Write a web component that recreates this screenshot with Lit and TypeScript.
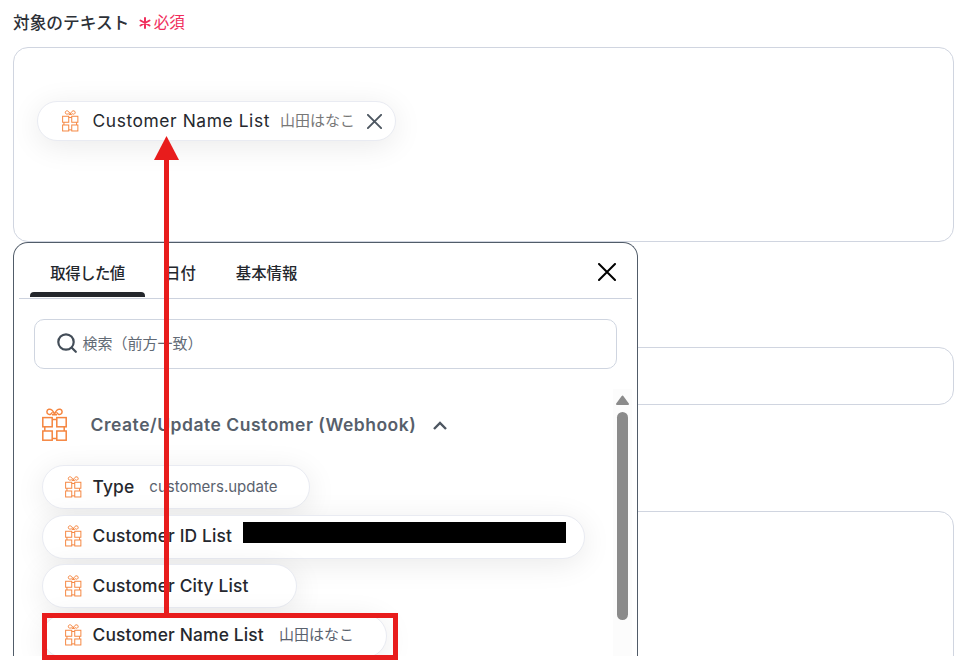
import { LitElement, html, css, svg } from "lit";
import { customElement, property } from "lit/decorators.js";

@customElement("gift-icon")
class GiftIcon extends LitElement {
  static styles = css`
    :host { display: block; flex: none; width: 25px; height: 33px; }
    svg { display: block; width: 100%; height: 100%; overflow: visible; }
  `;
  render() {
    const squares = [[0.8, 9.6], [14.8, 9.6], [0.8, 23], [14.8, 23]];
    return html`<svg viewBox="0 0 25 33" fill="none" stroke="#f5853f" stroke-width="1.5">
      <path d="M2.800 11.500h19.400v19h-19.400z" />
      ${squares.map(([x, y]) => svg`<rect x=${x} y=${y} width="9.4" height="9.2" fill="#fff" />`)}
      <path d="M12.500 6.500C11.500 3 9 .8 6.800 1.300 4.500 1.900 4.200 5 6.300 6.200c1.800.9 3.400-.6 4-2M12.500 6.500C13.500 3 16 .8 18.200 1.300c2.300.6 2.600 3.700.5 4.900-1.800.9-3.400-.6-4-2M10 6.800h5" />
    </svg>`;
  }
}

@customElement("value-chip")
class ValueChip extends LitElement {
  @property() label = "";
  @property() value = "";
  @property({ type: Boolean }) selected = false;
  @property({ type: Boolean }) redacted = false;
  static styles = css`
    :host {
      display: flex; align-items: center; box-sizing: border-box; width: max-content;
      height: 44px; padding: 0 32px 1.500px 22px; border: 1px solid #e9ebf2; border-radius: 22px;
      background: #fff; box-shadow: 0 5px 30px rgba(0, 0, 0, .085); white-space: nowrap;
    }
    gift-icon { width: 16.500px; height: 21.500px; }
    .label { margin-left: 11px; font-size: 17.400px; font-weight: 500; color: #25282e; letter-spacing: .15px; }
    .value { margin-left: 15px; font-size: 15px; line-height: 20px; margin-top: 1px; color: #5a626e; }
    .mask { width: 323px; height: 21px; margin: 0 -14px 6px 10.500px; background: #000; }
    .remove { width: 15px; height: 15px; margin-left: 12.500px; stroke: #4d5761; stroke-width: 1.800; fill: none; stroke-linecap: round; }
    :host([selected]) { height: 40px; padding: 0 12.500px 0 24px; }
    :host([selected]) gift-icon { margin-bottom: 1px; }
    :host([selected]) .label { margin: 0 0 1px 14px; font-size: 17.400px; font-weight: 400; letter-spacing: .58px; }
    :host([selected]) .value { margin: 0 0 1px 10px; color: #777; }
  `;
  render() {
    return html`<gift-icon></gift-icon>
      <span class="label">${this.label}</span>
      ${this.redacted ? html`<span class="mask"></span>` : html`<span class="value">${this.value}</span>`}
      ${this.selected ? html`<svg class="remove" viewBox="0 0 14 14"><path d="M.8.8l12.400 12.400M13.200.8L.8 13.200" /></svg>` : ""}`;
  }
}

@customElement("value-picker")
class ValuePicker extends LitElement {
  static styles = css`
    :host {
      display: flex; flex-direction: column; box-sizing: border-box; width: 625px; height: 414px;
      border: 1px solid #515c69; border-bottom: 0; border-radius: 15px 15px 0 0; background: #fff; overflow: hidden;
    }
    .tabs { display: flex; flex: none; box-sizing: border-box; height: 56px; margin: 0 5px; padding-left: 11px; border-bottom: 1px solid #ccd2de; }
    .tab { display: flex; flex-direction: column; justify-content: space-between; align-items: center; box-sizing: border-box; padding: 19px 20px 1px; font-size: 15.400px; line-height: 24px; font-weight: 500; color: #23272d; }
    .tab.active { padding: 19px 0 1px; width: 115px; }
    .tab.active span { letter-spacing: -.5px; }
    .bar { flex: none; width: 115px; height: 5px; border-radius: 4px 4px 0 0; background: #24272c; }
    .close { width: 18px; height: 18px; margin: 20px 16px 0 auto; fill: none; stroke: #000; stroke-width: 2; stroke-linecap: round; }
    .search { display: flex; flex: none; align-items: center; box-sizing: border-box; height: 50px; margin: 20px 20px 0; padding: 0 21.500px 2px; gap: 6px; border: 1px solid #cfd5e0; border-radius: 10px; font-size: 15px; color: #626a75; }
    .search span { line-height: 20px; margin-top: 1px; }
    .search svg { width: 20px; height: 20px; fill: none; stroke: #434d58; stroke-width: 2.200; stroke-linecap: round; }
    .body { display: flex; justify-content: space-between; height: 267px; margin: 20px 5px 0 0; }
    .list { flex: 1; overflow: hidden; padding: 0 0 0 28px; }
    .group { display: flex; align-items: center; height: 33px; margin: 19px 0 24px; font-size: 17.500px; font-weight: 600; letter-spacing: .52px; color: #575f6b; }
    .group span { margin: 0 17px 0 23.500px; }
    .group svg { width: 14px; height: 9px; margin-top: 2px; fill: none; stroke: #4d5661; stroke-width: 2.400; }
    .chips { display: flex; flex-direction: column; gap: 5.500px; }
    .scroll { display: flex; flex-direction: column; align-items: center; width: 19px; background: #fcfcfc; }
    .scroll svg { width: 13px; height: 10px; margin: 6px 0 7px; fill: #8b8b8b; stroke: #8b8b8b; stroke-width: 2; stroke-linejoin: round; }
    .thumb { width: 11px; height: 208px; border-radius: 6px; background: #8b8b8b; }
  `;
  render() {
    return html`
      <div class="tabs">
        <div class="tab active"><span>取得した値</span><i class="bar"></i></div>
        <div class="tab">日付</div>
        <div class="tab">基本情報</div>
        <svg class="close" viewBox="0 0 18 18"><path d="M1 1l16 16M17 1L1 17" /></svg>
      </div>
      <div class="search">
        <svg viewBox="0 0 20 20"><circle cx="9" cy="9" r="7.700" /><path d="M14.800 14.800l4 4" /></svg>
        <span>検索（前方一致）</span>
      </div>
      <div class="body">
        <div class="list">
          <div class="group">
            <gift-icon></gift-icon><span>Create/Update Customer (Webhook)</span>
            <svg viewBox="0 0 14 9"><path d="M1 8l6-6 6 6" /></svg>
          </div>
          <div class="chips">
            <value-chip label="Type" value="customers.update"></value-chip>
            <value-chip label="Customer ID List" redacted></value-chip>
            <value-chip label="Customer City List"></value-chip>
            <value-chip label="Customer Name List" value="山田はなこ"></value-chip>
          </div>
        </div>
        <div class="scroll">
          <svg viewBox="0 0 13 10"><path d="M6.500 1.500L12 9H1z" /></svg>
          <div class="thumb"></div>
        </div>
      </div>`;
  }
}

@customElement("app-root")
class AppRoot extends LitElement {
  static styles = css`
    :host { display: block; position: relative; width: 967px; height: 660px; overflow: hidden; background: #fff; font-family: Inter, "Noto Sans CJK JP", sans-serif; }
    .form { display: flex; flex-direction: column; box-sizing: border-box; height: 656px; padding: 0 13px; overflow: hidden; }
    .heading { display: flex; align-items: center; flex: none; height: 47px; padding-bottom: 4px; box-sizing: border-box; font-size: 16.700px; font-weight: 500; color: #2d3137; }
    .required { display: flex; align-items: center; gap: 3px; margin-left: 9.500px; font-size: 15.500px; line-height: 20px; margin-top: 2px; font-weight: 400; color: #f02e5c; }
    .required svg { width: 12px; height: 12px; stroke: currentColor; stroke-width: 2; stroke-linecap: round; }
    .field { flex: none; box-sizing: border-box; width: 941px; border: 1px solid #d0d5e0; border-radius: 15px; }
    .target { height: 195px; padding: 53px 23px; }
    .single { height: 58px; margin: 105px 0 106px; }
    .last { height: 200px; }
    .dialog { position: absolute; left: 13px; top: 242px; }
    .marker { position: absolute; left: 42px; top: 136px; width: 357px; height: 524px; fill: none; stroke: #e81c1c; stroke-width: 5; }
    .head { fill: #e81c1c; stroke: none; }
  `;
  render() {
    return html`
      <div class="form">
        <div class="heading">対象のテキスト
          <span class="required"><svg viewBox="0 0 12 12"><path d="M6 1v10M1.500 3.500l9 5M10.500 3.500l-9 5" /></svg>必須</span>
        </div>
        <div class="field target"><value-chip selected label="Customer Name List" value="山田はなこ"></value-chip></div>
        <div class="field single"></div>
        <div class="field last"></div>
      </div>
      <value-picker class="dialog"></value-picker>
      <svg class="marker" viewBox="0 0 357 524">
        <path d="M124.500 20V480" /><path class="head" d="M124.500 0L137 24H112z" />
        <rect x="2.500" y="479.500" width="351" height="42" />
      </svg>`;
  }
}
